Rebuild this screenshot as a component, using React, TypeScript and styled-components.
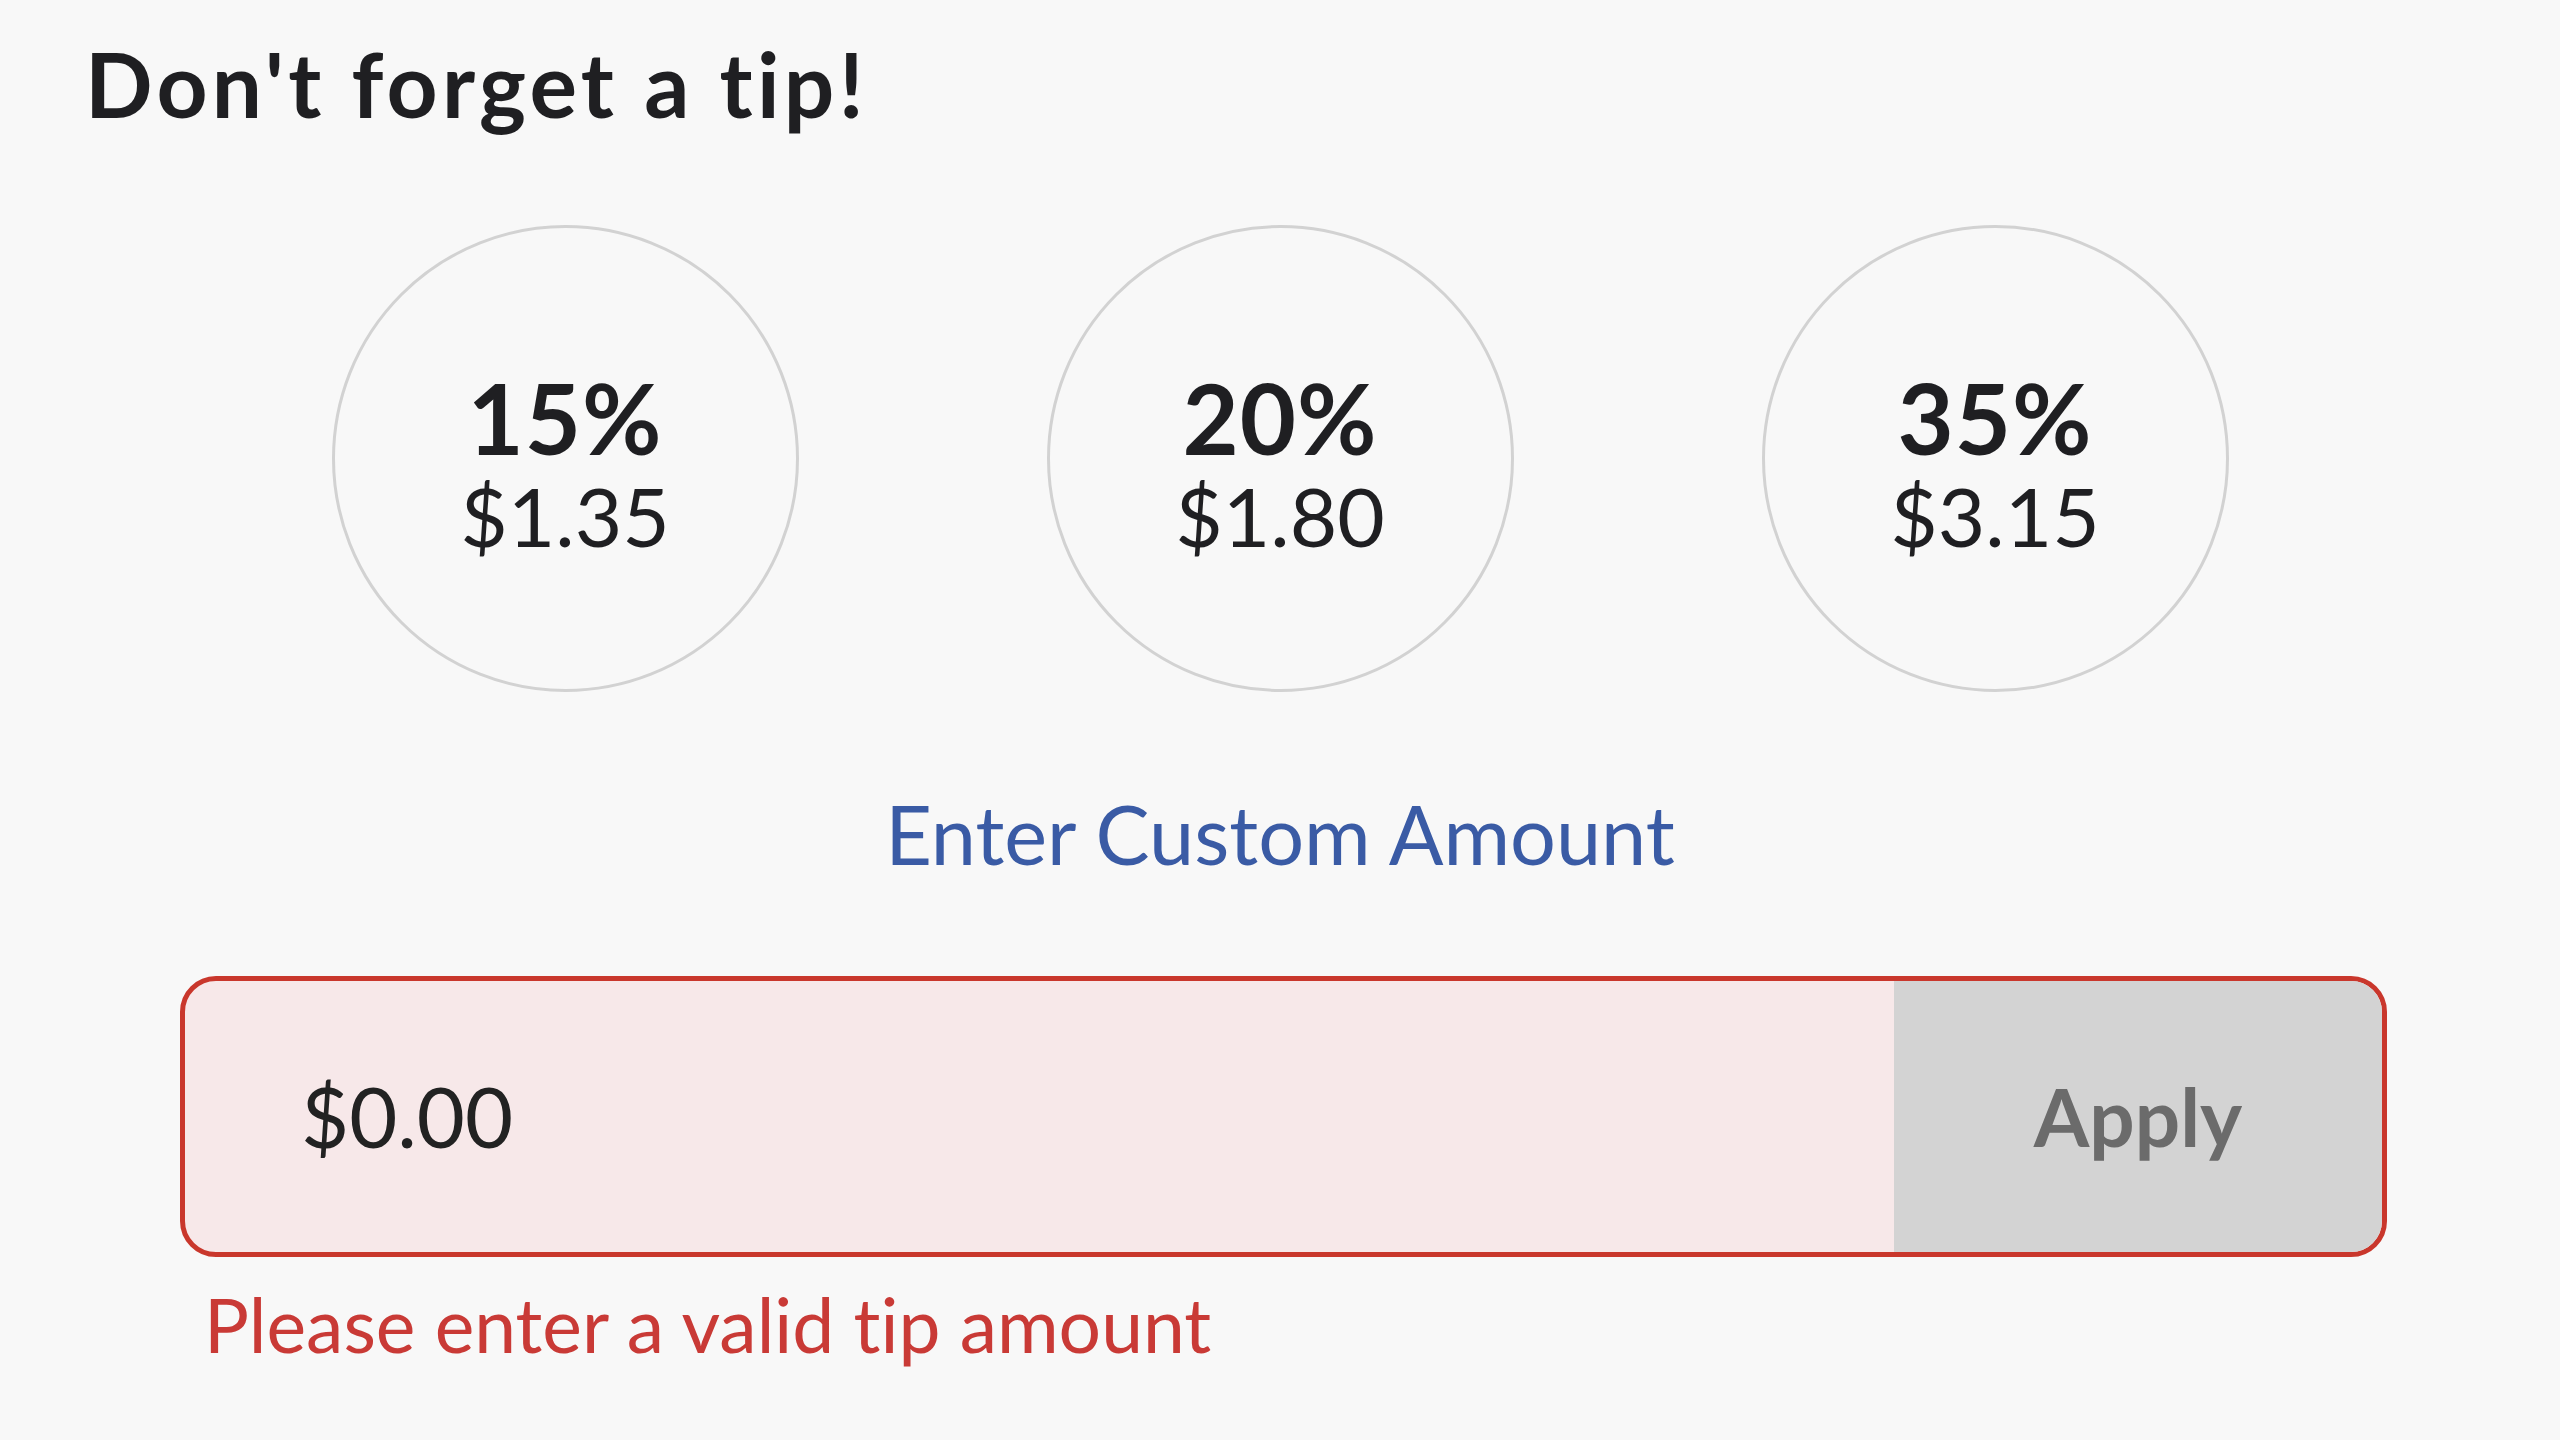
import React from "react";
import styled, { createGlobalStyle } from "styled-components";

const GlobalStyle = createGlobalStyle`
  html, body {
    margin: 0;
    padding: 0;
    background: #f8f8f8;
  }
  body {
    font-family: Lato, "Noto Sans", sans-serif;
    font-variant-ligatures: none;
    color: #1f1f22;
  }
`;

const tips = [
  { percent: 15, amount: "$1.35" },
  { percent: 20, amount: "$1.80" },
  { percent: 35, amount: "$3.15" },
];

export default function App() {
  return (
    <>
      <GlobalStyle />
      <Page>
        <Title>Don't forget a tip!</Title>
        <CircleRow>
          {tips.map((t) => (
            <TipCircle key={t.percent} type="button">
              <Percent>{t.percent}%</Percent>
              <Amount>{t.amount}</Amount>
            </TipCircle>
          ))}
        </CircleRow>
        <CustomLink type="button">Enter Custom Amount</CustomLink>
        <InputGroup>
          <AmountInput defaultValue="$0.00" />
          <ApplyButton type="button">Apply</ApplyButton>
        </InputGroup>
        <ErrorText>Please enter a valid tip amount</ErrorText>
      </Page>
    </>
  );
}

const Page = styled.div`
  width: 2560px;
  height: 1440px;
  box-sizing: border-box;
  padding: 31px 0 0;
  display: flex;
  flex-direction: column;
`;

const Title = styled.h1`
  margin: 0 0 0 85px;
  font-size: 89px;
  font-weight: 700;
  line-height: 1.2;
  letter-spacing: 4.3px;
  color: #1f1f22;
`;

const CircleRow = styled.div`
  display: flex;
  justify-content: center;
  gap: 248px;
  margin-top: 87px;
`;

const TipCircle = styled.button`
  width: 467px;
  height: 467px;
  box-sizing: border-box;
  border-radius: 50%;
  border: 3px solid #d2d2d2;
  background: transparent;
  display: flex;
  flex-direction: column;
  align-items: center;
  justify-content: center;
  padding: 6px 0 0;
  font-family: inherit;
  color: #1f1f22;
  cursor: pointer;
`;

const Percent = styled.span`
  font-size: 97px;
  font-weight: 700;
  line-height: 1.1;
  letter-spacing: 1px;
`;

const Amount = styled.span`
  font-size: 82px;
  font-weight: 400;
  line-height: 1.05;
`;

const CustomLink = styled.button`
  align-self: center;
  margin-top: 101px;
  padding: 0;
  border: none;
  background: none;
  font-family: inherit;
  font-size: 81px;
  line-height: 1;
  color: #3a5ba5;
  cursor: pointer;
`;

const InputGroup = styled.div`
  display: flex;
  margin: 102px 173px 0 180px;
  height: 281px;
  box-sizing: border-box;
  border: 5px solid #c9372c;
  border-radius: 36px;
  overflow: hidden;
  background: #f7e8e9;
`;

const AmountInput = styled.input`
  flex: 1;
  min-width: 0;
  border: none;
  outline: none;
  background: transparent;
  padding: 0 0 0 116px;
  font-family: inherit;
  font-size: 83px;
  color: #222;
`;

const ApplyButton = styled.button`
  width: 488px;
  border: none;
  background: #d3d3d3;
  font-family: inherit;
  font-size: 80px;
  font-weight: 700;
  color: #6b6b6b;
  cursor: pointer;
`;

const ErrorText = styled.p`
  margin: 30px 0 0 204px;
  font-size: 75px;
  line-height: 1;
  color: #c93a36;
`;
